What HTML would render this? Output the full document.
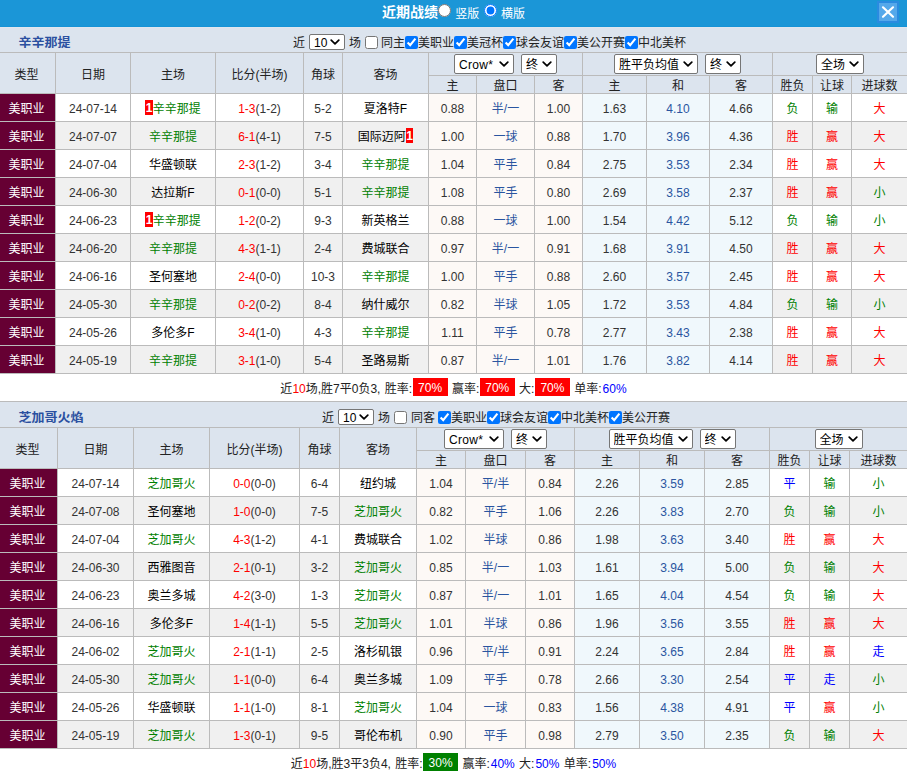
<!DOCTYPE html>
<html lang="zh-CN"><head><meta charset="utf-8"><title>近期战绩</title>
<style>
html,body{margin:0;padding:0;background:#fff;}
body{width:907px;height:773px;overflow:hidden;font-family:"Liberation Sans","Noto Sans CJK SC",sans-serif;font-size:12px;color:#333;}
#hd{position:relative;height:26px;border-bottom:1px solid #1693d6;background:#1b96d7;color:#fff;font-size:12px;white-space:nowrap;line-height:24px;}
#hd .in{position:absolute;left:382px;top:0;}
#hd .ttl{font-weight:bold;font-size:14px;}
#hd input{margin:0 1px 0 0;vertical-align:0;width:13px;height:13px;}
#hd label span{position:relative;top:1px;}
#hd label+label{margin-left:1px;}
#cls{position:absolute;left:877px;top:1px;width:18px;height:18px;background:#55a8ea;border:2px solid #2a8be0;}
#cls svg{display:block;}
table{border-collapse:separate;border-spacing:0;table-layout:fixed;width:907px;}
td,th{border-right:1px solid #bbb;border-bottom:1px solid #bbb;padding:0;text-align:center;font-weight:normal;height:28px;box-sizing:border-box;white-space:nowrap;overflow:hidden;}
td:last-child,th:last-child{border-right:none;}
tr.tt td{background:#dce4ee;height:26px;border-right:none;border-top:1px solid #e1e7ef;}
#t2 tr.tt td{border-top:1px solid #bbb;height:27px;}
.ttw{position:relative;height:24px;}
#t2 .ttw{height:25px;}
.tn{position:absolute;left:18.5px;top:4.5px;line-height:20px;font-weight:bold;color:#2b50a0;font-size:13px;transform:scaleY(0.93);}
.flt{position:absolute;top:5px;height:20px;line-height:20px;font-size:12px;color:#222;display:flex;align-items:center;}
#t1 .flt{left:293px;}
#t2 .flt{left:322px;top:6px;}
#t2 .f3 span{margin-left:4px;margin-right:3px;}
#t2 .tn{top:5.5px;}
.flt label{display:flex;align-items:center;}
.f1{margin-right:4px;}
.f2{margin:0 4px 0 4px;}
.f3 span{margin-left:3px;}
th{background:#dce4ee;color:#222;font-size:12px;}
tr.h1 th{height:41px;}
tr.h1 th.sh{height:23px;}
tr.h2 th{height:18px;}
tr.o td,tr.e td{vertical-align:top;padding-top:7px;line-height:16px;}
tr.o td{background:#fff;}
tr.e td{background:#f0f0f0;}
td.lg{background:#660033 !important;color:#fff;padding-right:2px;}
tr.h1 th:first-child{padding-right:2px;}
tr td.c1{background:#fdf9f6;}
tr td.c2{background:#f0f8fc;}
td.tm{color:#000;}
.g{color:#008000;}
.r{color:#ff0000;}
.b{color:#0000ff;}
.bl{color:#0000ff;margin-left:1px;}
.pk,.dr{color:#2a55a0;}
.rc{display:inline-block;background:#f00;color:#fff;font-weight:bold;width:7.5px;height:15px;line-height:16px;text-align:center;vertical-align:baseline;margin:-3px 0;position:relative;top:-1px;}
tr.sum td{background:#fff;border:none;height:27px;font-size:12px;color:#222;vertical-align:top;padding-top:5px;line-height:18px;word-spacing:1px;}
.bd{display:inline-block;color:#fff;width:35px;height:18px;line-height:20px;text-align:center;font-size:12px;margin:0 0 0 0.5px;position:relative;top:-1px;}
.hot{background:#f00;}
.cold{background:#008000;}
.sw{display:inline-block;position:relative;vertical-align:middle;height:20px;margin:0 3.5px;box-sizing:border-box;}
.sw select{appearance:none;-webkit-appearance:none;display:block;width:100%;height:100%;margin:0;border:1px solid #767676;border-radius:2px;background:#fff;color:#000;padding:1px 0 0 4px;font-family:"Liberation Sans","Noto Sans CJK SC",sans-serif;font-size:12px;box-sizing:border-box;}
.sw .cv{position:absolute;right:5px;top:7px;}
.s10{width:36px;height:16px;margin:0;position:relative;top:-1px;}
.s10 .cv{top:5px;}
.sc{width:60px;}.sc select{letter-spacing:0.3px;}.sz{width:36px;}.sv{width:84px;}.sq{width:48px;}
.flt input{margin:0;width:13px;height:13px;flex:none;position:relative;top:-1px;}

</style></head><body>
<div id="hd"><div class="in"><span class="ttl">近期战绩</span><label><input type="radio" name="v"> <span>竖版</span></label> <label><input type="radio" name="v" checked> <span>横版</span></label></div><span id="cls"><svg width="18" height="18" viewBox="0 0 18 18"><path d="M4 4.3 L14 13.7 M14 4.3 L4 13.7" stroke="#fff" stroke-width="2.2" stroke-linecap="round" fill="none"/></svg></span></div>
<table id="t1" cellspacing="0" cellpadding="0">
<colgroup><col style="width:56px"><col style="width:75px"><col style="width:85px"><col style="width:88px"><col style="width:39px"><col style="width:86px"><col style="width:48px"><col style="width:58px"><col style="width:48px"><col style="width:64px"><col style="width:63px"><col style="width:63px"><col style="width:40px"><col style="width:39px"><col style="width:55px"></colgroup>
<tr class="tt"><td colspan="15"><div class="ttw"><span class="tn">辛辛那提</span><span class="flt"><span class="f1">近</span><span class="sw s10"><select><option>10</option></select><svg class="cv" width="10" height="6" viewBox="0 0 10 6"><path d="M1.2 1.2 L5 4.9 L8.8 1.2" stroke="#000" stroke-width="1.7" fill="none" stroke-linecap="round" stroke-linejoin="round"/></svg></span><span class="f2">场</span><label class="f3"><input type="checkbox"><span>同主</span></label><label><input type="checkbox" checked>美职业</label><label><input type="checkbox" checked>美冠杯</label><label><input type="checkbox" checked>球会友谊</label><label><input type="checkbox" checked>美公开赛</label><label><input type="checkbox" checked>中北美杯</label></span></div></td></tr>
<tr class="h1"><th rowspan="2">类型</th><th rowspan="2">日期</th><th rowspan="2">主场</th><th rowspan="2">比分(半场)</th><th rowspan="2">角球</th><th rowspan="2">客场</th><th colspan="3" class="sh"><span class="sw sc"><select><option>Crow*</option></select><svg class="cv" width="10" height="6" viewBox="0 0 10 6"><path d="M1.2 1.2 L5 4.9 L8.8 1.2" stroke="#000" stroke-width="1.7" fill="none" stroke-linecap="round" stroke-linejoin="round"/></svg></span><span class="sw sz"><select><option>终</option></select><svg class="cv" width="10" height="6" viewBox="0 0 10 6"><path d="M1.2 1.2 L5 4.9 L8.8 1.2" stroke="#000" stroke-width="1.7" fill="none" stroke-linecap="round" stroke-linejoin="round"/></svg></span></th><th colspan="3" class="sh"><span class="sw sv"><select><option>胜平负均值</option></select><svg class="cv" width="10" height="6" viewBox="0 0 10 6"><path d="M1.2 1.2 L5 4.9 L8.8 1.2" stroke="#000" stroke-width="1.7" fill="none" stroke-linecap="round" stroke-linejoin="round"/></svg></span><span class="sw sz"><select><option>终</option></select><svg class="cv" width="10" height="6" viewBox="0 0 10 6"><path d="M1.2 1.2 L5 4.9 L8.8 1.2" stroke="#000" stroke-width="1.7" fill="none" stroke-linecap="round" stroke-linejoin="round"/></svg></span></th><th colspan="3" class="sh"><span class="sw sq"><select><option>全场</option></select><svg class="cv" width="10" height="6" viewBox="0 0 10 6"><path d="M1.2 1.2 L5 4.9 L8.8 1.2" stroke="#000" stroke-width="1.7" fill="none" stroke-linecap="round" stroke-linejoin="round"/></svg></span></th></tr>
<tr class="h2"><th>主</th><th>盘口</th><th>客</th><th>主</th><th>和</th><th>客</th><th>胜负</th><th>让球</th><th>进球数</th></tr>
<tr class="o"><td class="lg">美职业</td><td>24-07-14</td><td class="tm"><span class="rc">1</span><span class="g">辛辛那提</span></td><td><span class="r">1-3</span>(1-2)</td><td>5-2</td><td class="tm">夏洛特F</td><td class="c1">0.88</td><td class="c1 pk">半/一</td><td class="c1">1.00</td><td class="c2">1.63</td><td class="c2 dr">4.10</td><td class="c2">4.66</td><td><span class="g">负</span></td><td><span class="g">输</span></td><td><span class="r">大</span></td></tr>
<tr class="e"><td class="lg">美职业</td><td>24-07-07</td><td class="tm"><span class="g">辛辛那提</span></td><td><span class="r">6-1</span>(4-1)</td><td>7-5</td><td class="tm">国际迈阿<span class="rc">1</span></td><td class="c1">1.00</td><td class="c1 pk">一球</td><td class="c1">0.88</td><td class="c2">1.70</td><td class="c2 dr">3.96</td><td class="c2">4.36</td><td><span class="r">胜</span></td><td><span class="r">赢</span></td><td><span class="r">大</span></td></tr>
<tr class="o"><td class="lg">美职业</td><td>24-07-04</td><td class="tm">华盛顿联</td><td><span class="r">2-3</span>(1-2)</td><td>3-4</td><td class="tm"><span class="g">辛辛那提</span></td><td class="c1">1.04</td><td class="c1 pk">平手</td><td class="c1">0.84</td><td class="c2">2.75</td><td class="c2 dr">3.53</td><td class="c2">2.34</td><td><span class="r">胜</span></td><td><span class="r">赢</span></td><td><span class="r">大</span></td></tr>
<tr class="e"><td class="lg">美职业</td><td>24-06-30</td><td class="tm">达拉斯F</td><td><span class="r">0-1</span>(0-0)</td><td>5-1</td><td class="tm"><span class="g">辛辛那提</span></td><td class="c1">1.08</td><td class="c1 pk">平手</td><td class="c1">0.80</td><td class="c2">2.69</td><td class="c2 dr">3.58</td><td class="c2">2.37</td><td><span class="r">胜</span></td><td><span class="r">赢</span></td><td><span class="g">小</span></td></tr>
<tr class="o"><td class="lg">美职业</td><td>24-06-23</td><td class="tm"><span class="rc">1</span><span class="g">辛辛那提</span></td><td><span class="r">1-2</span>(0-2)</td><td>9-3</td><td class="tm">新英格兰</td><td class="c1">0.88</td><td class="c1 pk">一球</td><td class="c1">1.00</td><td class="c2">1.54</td><td class="c2 dr">4.42</td><td class="c2">5.12</td><td><span class="g">负</span></td><td><span class="g">输</span></td><td><span class="g">小</span></td></tr>
<tr class="e"><td class="lg">美职业</td><td>24-06-20</td><td class="tm"><span class="g">辛辛那提</span></td><td><span class="r">4-3</span>(1-1)</td><td>2-4</td><td class="tm">费城联合</td><td class="c1">0.97</td><td class="c1 pk">半/一</td><td class="c1">0.91</td><td class="c2">1.68</td><td class="c2 dr">3.91</td><td class="c2">4.50</td><td><span class="r">胜</span></td><td><span class="r">赢</span></td><td><span class="r">大</span></td></tr>
<tr class="o"><td class="lg">美职业</td><td>24-06-16</td><td class="tm">圣何塞地</td><td><span class="r">2-4</span>(0-0)</td><td>10-3</td><td class="tm"><span class="g">辛辛那提</span></td><td class="c1">1.00</td><td class="c1 pk">平手</td><td class="c1">0.88</td><td class="c2">2.60</td><td class="c2 dr">3.57</td><td class="c2">2.45</td><td><span class="r">胜</span></td><td><span class="r">赢</span></td><td><span class="r">大</span></td></tr>
<tr class="e"><td class="lg">美职业</td><td>24-05-30</td><td class="tm"><span class="g">辛辛那提</span></td><td><span class="r">0-2</span>(0-2)</td><td>8-4</td><td class="tm">纳什威尔</td><td class="c1">0.82</td><td class="c1 pk">半球</td><td class="c1">1.05</td><td class="c2">1.72</td><td class="c2 dr">3.53</td><td class="c2">4.84</td><td><span class="g">负</span></td><td><span class="g">输</span></td><td><span class="g">小</span></td></tr>
<tr class="o"><td class="lg">美职业</td><td>24-05-26</td><td class="tm">多伦多F</td><td><span class="r">3-4</span>(1-0)</td><td>4-3</td><td class="tm"><span class="g">辛辛那提</span></td><td class="c1">1.11</td><td class="c1 pk">平手</td><td class="c1">0.78</td><td class="c2">2.77</td><td class="c2 dr">3.43</td><td class="c2">2.38</td><td><span class="r">胜</span></td><td><span class="r">赢</span></td><td><span class="r">大</span></td></tr>
<tr class="e"><td class="lg">美职业</td><td>24-05-19</td><td class="tm"><span class="g">辛辛那提</span></td><td><span class="r">3-1</span>(1-0)</td><td>5-4</td><td class="tm">圣路易斯</td><td class="c1">0.87</td><td class="c1 pk">半/一</td><td class="c1">1.01</td><td class="c2">1.76</td><td class="c2 dr">3.82</td><td class="c2">4.14</td><td><span class="r">胜</span></td><td><span class="r">赢</span></td><td><span class="r">大</span></td></tr>
<tr class="sum"><td colspan="15">近<span class="r">10</span>场,胜7平0负3, 胜率:<span class="bd hot">70%</span> 赢率:<span class="bd hot">70%</span> 大:<span class="bd hot">70%</span> 单率:<span class="bl">60%</span></td></tr>
</table>
<table id="t2" cellspacing="0" cellpadding="0">
<colgroup><col style="width:58px"><col style="width:76px"><col style="width:76px"><col style="width:90px"><col style="width:40px"><col style="width:77px"><col style="width:49px"><col style="width:60px"><col style="width:49px"><col style="width:65px"><col style="width:65px"><col style="width:65px"><col style="width:40px"><col style="width:40px"><col style="width:57px"></colgroup>
<tr class="tt"><td colspan="15"><div class="ttw"><span class="tn">芝加哥火焰</span><span class="flt"><span class="f1">近</span><span class="sw s10"><select><option>10</option></select><svg class="cv" width="10" height="6" viewBox="0 0 10 6"><path d="M1.2 1.2 L5 4.9 L8.8 1.2" stroke="#000" stroke-width="1.7" fill="none" stroke-linecap="round" stroke-linejoin="round"/></svg></span><span class="f2">场</span><label class="f3"><input type="checkbox"><span>同客</span></label><label><input type="checkbox" checked>美职业</label><label><input type="checkbox" checked>球会友谊</label><label><input type="checkbox" checked>中北美杯</label><label><input type="checkbox" checked>美公开赛</label></span></div></td></tr>
<tr class="h1"><th rowspan="2">类型</th><th rowspan="2">日期</th><th rowspan="2">主场</th><th rowspan="2">比分(半场)</th><th rowspan="2">角球</th><th rowspan="2">客场</th><th colspan="3" class="sh"><span class="sw sc"><select><option>Crow*</option></select><svg class="cv" width="10" height="6" viewBox="0 0 10 6"><path d="M1.2 1.2 L5 4.9 L8.8 1.2" stroke="#000" stroke-width="1.7" fill="none" stroke-linecap="round" stroke-linejoin="round"/></svg></span><span class="sw sz"><select><option>终</option></select><svg class="cv" width="10" height="6" viewBox="0 0 10 6"><path d="M1.2 1.2 L5 4.9 L8.8 1.2" stroke="#000" stroke-width="1.7" fill="none" stroke-linecap="round" stroke-linejoin="round"/></svg></span></th><th colspan="3" class="sh"><span class="sw sv"><select><option>胜平负均值</option></select><svg class="cv" width="10" height="6" viewBox="0 0 10 6"><path d="M1.2 1.2 L5 4.9 L8.8 1.2" stroke="#000" stroke-width="1.7" fill="none" stroke-linecap="round" stroke-linejoin="round"/></svg></span><span class="sw sz"><select><option>终</option></select><svg class="cv" width="10" height="6" viewBox="0 0 10 6"><path d="M1.2 1.2 L5 4.9 L8.8 1.2" stroke="#000" stroke-width="1.7" fill="none" stroke-linecap="round" stroke-linejoin="round"/></svg></span></th><th colspan="3" class="sh"><span class="sw sq"><select><option>全场</option></select><svg class="cv" width="10" height="6" viewBox="0 0 10 6"><path d="M1.2 1.2 L5 4.9 L8.8 1.2" stroke="#000" stroke-width="1.7" fill="none" stroke-linecap="round" stroke-linejoin="round"/></svg></span></th></tr>
<tr class="h2"><th>主</th><th>盘口</th><th>客</th><th>主</th><th>和</th><th>客</th><th>胜负</th><th>让球</th><th>进球数</th></tr>
<tr class="o"><td class="lg">美职业</td><td>24-07-14</td><td class="tm"><span class="g">芝加哥火</span></td><td><span class="r">0-0</span>(0-0)</td><td>6-4</td><td class="tm">纽约城</td><td class="c1">1.04</td><td class="c1 pk">平/半</td><td class="c1">0.84</td><td class="c2">2.26</td><td class="c2 dr">3.59</td><td class="c2">2.85</td><td><span class="b">平</span></td><td><span class="g">输</span></td><td><span class="g">小</span></td></tr>
<tr class="e"><td class="lg">美职业</td><td>24-07-08</td><td class="tm">圣何塞地</td><td><span class="r">1-0</span>(0-0)</td><td>7-5</td><td class="tm"><span class="g">芝加哥火</span></td><td class="c1">0.82</td><td class="c1 pk">平手</td><td class="c1">1.06</td><td class="c2">2.26</td><td class="c2 dr">3.83</td><td class="c2">2.70</td><td><span class="g">负</span></td><td><span class="g">输</span></td><td><span class="g">小</span></td></tr>
<tr class="o"><td class="lg">美职业</td><td>24-07-04</td><td class="tm"><span class="g">芝加哥火</span></td><td><span class="r">4-3</span>(1-2)</td><td>4-1</td><td class="tm">费城联合</td><td class="c1">1.02</td><td class="c1 pk">半球</td><td class="c1">0.86</td><td class="c2">1.98</td><td class="c2 dr">3.63</td><td class="c2">3.40</td><td><span class="r">胜</span></td><td><span class="r">赢</span></td><td><span class="r">大</span></td></tr>
<tr class="e"><td class="lg">美职业</td><td>24-06-30</td><td class="tm">西雅图音</td><td><span class="r">2-1</span>(0-1)</td><td>3-2</td><td class="tm"><span class="g">芝加哥火</span></td><td class="c1">0.85</td><td class="c1 pk">半/一</td><td class="c1">1.03</td><td class="c2">1.61</td><td class="c2 dr">3.94</td><td class="c2">5.00</td><td><span class="g">负</span></td><td><span class="g">输</span></td><td><span class="r">大</span></td></tr>
<tr class="o"><td class="lg">美职业</td><td>24-06-23</td><td class="tm">奥兰多城</td><td><span class="r">4-2</span>(3-0)</td><td>1-3</td><td class="tm"><span class="g">芝加哥火</span></td><td class="c1">0.87</td><td class="c1 pk">半/一</td><td class="c1">1.01</td><td class="c2">1.65</td><td class="c2 dr">4.04</td><td class="c2">4.54</td><td><span class="g">负</span></td><td><span class="g">输</span></td><td><span class="r">大</span></td></tr>
<tr class="e"><td class="lg">美职业</td><td>24-06-16</td><td class="tm">多伦多F</td><td><span class="r">1-4</span>(1-1)</td><td>5-5</td><td class="tm"><span class="g">芝加哥火</span></td><td class="c1">1.01</td><td class="c1 pk">半球</td><td class="c1">0.86</td><td class="c2">1.96</td><td class="c2 dr">3.56</td><td class="c2">3.55</td><td><span class="r">胜</span></td><td><span class="r">赢</span></td><td><span class="r">大</span></td></tr>
<tr class="o"><td class="lg">美职业</td><td>24-06-02</td><td class="tm"><span class="g">芝加哥火</span></td><td><span class="r">2-1</span>(1-1)</td><td>2-5</td><td class="tm">洛杉矶银</td><td class="c1">0.96</td><td class="c1 pk">平/半</td><td class="c1">0.91</td><td class="c2">2.24</td><td class="c2 dr">3.65</td><td class="c2">2.84</td><td><span class="r">胜</span></td><td><span class="r">赢</span></td><td><span class="b">走</span></td></tr>
<tr class="e"><td class="lg">美职业</td><td>24-05-30</td><td class="tm"><span class="g">芝加哥火</span></td><td><span class="r">1-1</span>(0-0)</td><td>6-4</td><td class="tm">奥兰多城</td><td class="c1">1.09</td><td class="c1 pk">平手</td><td class="c1">0.78</td><td class="c2">2.66</td><td class="c2 dr">3.30</td><td class="c2">2.54</td><td><span class="b">平</span></td><td><span class="b">走</span></td><td><span class="g">小</span></td></tr>
<tr class="o"><td class="lg">美职业</td><td>24-05-26</td><td class="tm">华盛顿联</td><td><span class="r">1-1</span>(1-0)</td><td>8-1</td><td class="tm"><span class="g">芝加哥火</span></td><td class="c1">1.04</td><td class="c1 pk">一球</td><td class="c1">0.83</td><td class="c2">1.56</td><td class="c2 dr">4.38</td><td class="c2">4.91</td><td><span class="b">平</span></td><td><span class="r">赢</span></td><td><span class="g">小</span></td></tr>
<tr class="e"><td class="lg">美职业</td><td>24-05-19</td><td class="tm"><span class="g">芝加哥火</span></td><td><span class="r">1-3</span>(0-1)</td><td>9-5</td><td class="tm">哥伦布机</td><td class="c1">0.90</td><td class="c1 pk">平手</td><td class="c1">0.98</td><td class="c2">2.79</td><td class="c2 dr">3.50</td><td class="c2">2.35</td><td><span class="g">负</span></td><td><span class="g">输</span></td><td><span class="r">大</span></td></tr>
<tr class="sum"><td colspan="15">近<span class="r">10</span>场,胜3平3负4, 胜率:<span class="bd cold">30%</span> 赢率:<span class="bl">40%</span> 大:<span class="bl">50%</span> 单率:<span class="bl">50%</span></td></tr>
</table>
</body></html>
